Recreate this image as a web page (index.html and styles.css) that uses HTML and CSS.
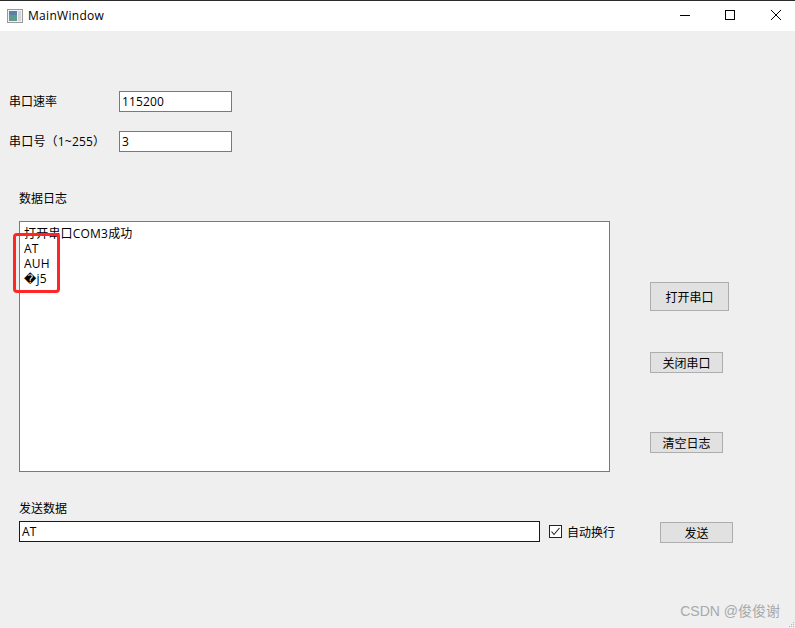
FILE: index.html
```html
<!DOCTYPE html>
<html lang="zh">
<head>
<meta charset="utf-8">
<title>MainWindow</title>
<link rel="stylesheet" href="styles.css">
</head>
<body>
<div class="window">
  <header class="titlebar">
    <svg class="app-icon" width="16" height="14" viewBox="0 0 16 14">
      <rect x="0.5" y="0.5" width="15" height="13" fill="#f2f2f2" stroke="#9a9a9a"/>
      <rect x="2" y="2" width="8" height="10" fill="#5f9a8f"/>
      <rect x="2" y="2" width="8" height="4" fill="#5a7fa8"/>
      <rect x="11" y="2" width="3" height="10" fill="#d5d5d5"/>
    </svg>
    <span class="title">MainWindow</span>
    <div class="controls">
      <svg class="ctl ctl-min" width="10" height="10" viewBox="0 0 10 10"><path d="M0 5.5H10" stroke="#000" fill="none"/></svg>
      <svg class="ctl ctl-max" width="10" height="10" viewBox="0 0 10 10"><rect x="0.5" y="0.5" width="9" height="9" stroke="#000" fill="none"/></svg>
      <svg class="ctl ctl-close" width="10" height="10" viewBox="0 0 10 10"><path d="M0 0L10 10M10 0L0 10" stroke="#000" stroke-width="1" fill="none"/></svg>
    </div>
  </header>
  <main class="client">
    <div class="form-row">
      <label class="form-label">串口速率</label>
      <div class="input">115200</div>
    </div>
    <div class="form-row form-row-second">
      <label class="form-label">串口号（1~255）</label>
      <div class="input">3</div>
    </div>
    <div class="section-label log-label">数据日志</div>
    <div class="middle">
      <div class="log">
        <div class="log-line">打开串口COM3成功</div>
        <div class="log-line">AT</div>
        <div class="log-line">AUH</div>
        <div class="log-line"><span class="bad">�</span>j5</div>
        <div class="highlight"></div>
      </div>
      <div class="actions">
        <button class="btn btn-open">打开串口</button>
        <button class="btn btn-close">关闭串口</button>
        <button class="btn btn-clear">清空日志</button>
      </div>
    </div>
    <div class="section-label send-label">发送数据</div>
    <div class="send-row">
      <div class="input input-send">AT</div>
      <div class="check">
        <svg class="check-box" width="13" height="13" viewBox="0 0 13 13">
          <rect x="0.5" y="0.5" width="12" height="12" fill="#fff" stroke="#222"/>
          <path d="M2.5 6.5L5 9.5L10.5 3" fill="none" stroke="#222" stroke-width="1.1"/>
        </svg>
        <span class="check-text">自动换行</span>
      </div>
      <button class="btn btn-send">发送</button>
    </div>
    <div class="watermark">CSDN @俊俊谢</div>
    <svg class="grip" width="6" height="6" viewBox="0 0 6 6">
      <path d="M4 0h1v1H4zM2 2h1v1H2zM4 2h1v1H4zM0 4h1v1H0zM2 4h1v1H2zM4 4h1v1H4z" fill="#b5b5b5"/>
    </svg>
  </main>
</div>
</body>
</html>
```

FILE: styles.css
```css
* { box-sizing: border-box; }
html, body { margin: 0; padding: 0; }
body {
  width: 795px;
  height: 628px;
  overflow: hidden;
  font-family: "Open Sans", "Noto Sans CJK SC", sans-serif;
  font-size: 12px;
  color: #000;
}
.window {
  width: 795px;
  height: 628px;
  display: flex;
  flex-direction: column;
  background: #efefef;
}
.titlebar {
  flex: none;
  height: 31px;
  background: #fff;
  border-top: 1px solid #2b2b2b;
  display: flex;
  align-items: center;
  padding-left: 7px;
}
.app-icon { flex: none; margin-top: -1px; }
.title { margin-left: 5px; margin-top: -2px; font-size: 12px; letter-spacing: 0.3px; color: #000; }
.controls {
  margin-left: auto;
  display: flex;
  align-items: center;
  padding-right: 14px;
  margin-top: -2px;
}
.ctl { display: block; }
.ctl-max { margin-left: 35px; }
.ctl-close { margin-left: 36px; }
.client {
  flex: 1;
  position: relative;
  padding: 60px 0 0 0;
}
.form-row {
  display: flex;
  align-items: center;
  height: 21px;
  padding-left: 9px;
}
.form-row-second { margin-top: 19px; }
.form-row-second .form-label { letter-spacing: 0.2px; }
.form-label { width: 110px; flex: none; line-height: 21px; }
.input {
  width: 113px;
  height: 21px;
  background: #fff;
  border: 1px solid #7a7a7a;
  line-height: 19px;
  padding-left: 2px;
  letter-spacing: 0.15px;
  color: #000;
}
.section-label {
  margin-left: 19px;
  line-height: 18px;
  height: 18px;
}
.log-label { margin-top: 38px; }
.middle {
  display: flex;
  margin-top: 13px;
  margin-left: 19px;
}
.log {
  position: relative;
  width: 591px;
  height: 251px;
  background: #fff;
  border: 1px solid #7a7a7a;
  padding: 4px 4px;
  flex: none;
}
.log-line { line-height: 15px; height: 15px; white-space: nowrap; letter-spacing: 0.2px; }
.bad { font-family: "DejaVu Sans", sans-serif; }
.highlight {
  position: absolute;
  left: -7px;
  top: 11px;
  width: 47px;
  height: 60px;
  border: 3px solid #ff2626;
  border-radius: 4px;
}
.actions {
  display: flex;
  flex-direction: column;
  align-items: flex-start;
  margin-left: 40px;
  padding-top: 61px;
}
.btn {
  font: inherit;
  color: #000;
  background: #e1e1e1;
  border: 1px solid #adadad;
  padding: 0;
  display: block;
}
.btn-open { width: 79px; height: 29px; }
.btn-close { width: 73px; height: 21px; margin-top: 41px; }
.btn-clear { width: 73px; height: 21px; margin-top: 59px; }
.send-label { margin-top: 28px; }
.send-row {
  display: flex;
  align-items: flex-start;
  margin-top: 3px;
  margin-left: 19px;
}
.input-send {
  width: 521px;
  border-color: #1a1a1a;
}
.check {
  display: flex;
  align-items: center;
  margin-left: 9px;
  height: 21px;
  width: 111px;
  flex: none;
}
.check-box { flex: none; }
.check-text { margin-left: 5px; }
.btn-send { width: 73px; height: 21px; margin-top: 1px; }
.watermark {
  position: absolute;
  right: 15px;
  top: 571px;
  font-family: "Liberation Sans", "Noto Sans CJK SC", sans-serif;
  font-size: 14px;
  line-height: 18px;
  color: #a9a9a9;
  white-space: nowrap;
}
.grip { position: absolute; right: 0; bottom: 0; }
```
